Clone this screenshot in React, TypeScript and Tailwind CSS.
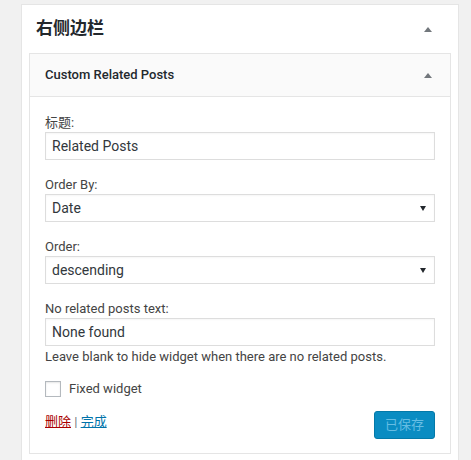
import React from 'react';

const font = { fontFamily: 'Roboto, "Noto Sans CJK SC", sans-serif' };

const Caret = () => (
  <svg width="8" height="5" viewBox="0 0 8 5" className="block">
    <path d="M0 5 L4 0 L8 5 Z" fill="#72777c" />
  </svg>
);

const SelectBox: React.FC<{ value: string }> = ({ value }) => (
  <div className="flex items-center justify-between h-[28px] border border-[#dddddd] bg-white pl-[6px] pr-[8px] text-[14px] text-[#32373c] shadow-[inset_0_1px_2px_rgba(0,0,0,0.04)]">
    <span>{value}</span>
    <svg width="6" height="5" viewBox="0 0 6 5" className="block">
      <path d="M0 0 L6 0 L3 5 Z" fill="#23282d" />
    </svg>
  </div>
);

const TextBox: React.FC<{ value: string }> = ({ value }) => (
  <div className="flex items-center h-[28px] border border-[#dddddd] bg-white px-[6px] text-[14px] text-[#32373c] shadow-[inset_0_1px_2px_rgba(0,0,0,0.04)]">
    {value}
  </div>
);

const Label: React.FC<{ children: React.ReactNode; className?: string }> = ({ children, className = '' }) => (
  <div className={`text-[13px] leading-[18px] text-[#444444] ${className}`}>{children}</div>
);

export default function App() {
  return (
    <div className="w-[471px] h-[460px] overflow-hidden bg-[#f1f1f1]" style={font}>
      <div className="ml-[21px] mt-[4px] w-[438px] h-[470px] bg-white border border-[#e5e5e5]">
        <div className="flex items-center justify-between h-[48px] pl-[14px] pr-[26px]">
          <h2 className="text-[17px] font-bold text-[#23282d]">右侧边栏</h2>
          <Caret />
        </div>

        <div className="mx-[7px] border border-[#e5e5e5]">
          <div className="flex items-center justify-between h-[43px] bg-[#fafafa] border-b border-[#e5e5e5] px-[15px] pr-[18px]">
            <h3 className="text-[13px] font-medium text-[#23282d]">Custom Related Posts</h3>
            <Caret />
          </div>

          <div className="px-[15px] pt-[17px] pb-[14px]">
            <Label>标题:</Label>
            <TextBox value="Related Posts" />

            <Label className="mt-[16px]">Order By:</Label>
            <SelectBox value="Date" />

            <Label className="mt-[16px]">Order:</Label>
            <SelectBox value="descending" />

            <Label className="mt-[16px]">No related posts text:</Label>
            <TextBox value="None found" />
            <Label className="pt-[2px]">Leave blank to hide widget when there are no related posts.</Label>

            <div className="flex items-center gap-[8px] mt-[15px] h-[16px]">
              <span className="w-[16px] h-[16px] border border-[#b4b9be] bg-white shadow-[inset_0_1px_2px_rgba(0,0,0,0.1)]" />
              <span className="text-[13px] text-[#444444]">Fixed widget</span>
            </div>

            <div className="flex justify-between items-start mt-[14px]">
              <div className="pt-[2px] text-[13px] leading-[18px]">
                <a className="text-[#a00] underline">删除</a>
                <span className="text-[#72777c]"> | </span>
                <a className="text-[#0073aa] underline">完成</a>
              </div>
              <button className="h-[28px] w-[61px] rounded-[3px] bg-[#0a8cc2] text-[13px] text-[#66bde3] border border-[#0479a8]">
                已保存
              </button>
            </div>
          </div>
        </div>
      </div>
    </div>
  );
}
